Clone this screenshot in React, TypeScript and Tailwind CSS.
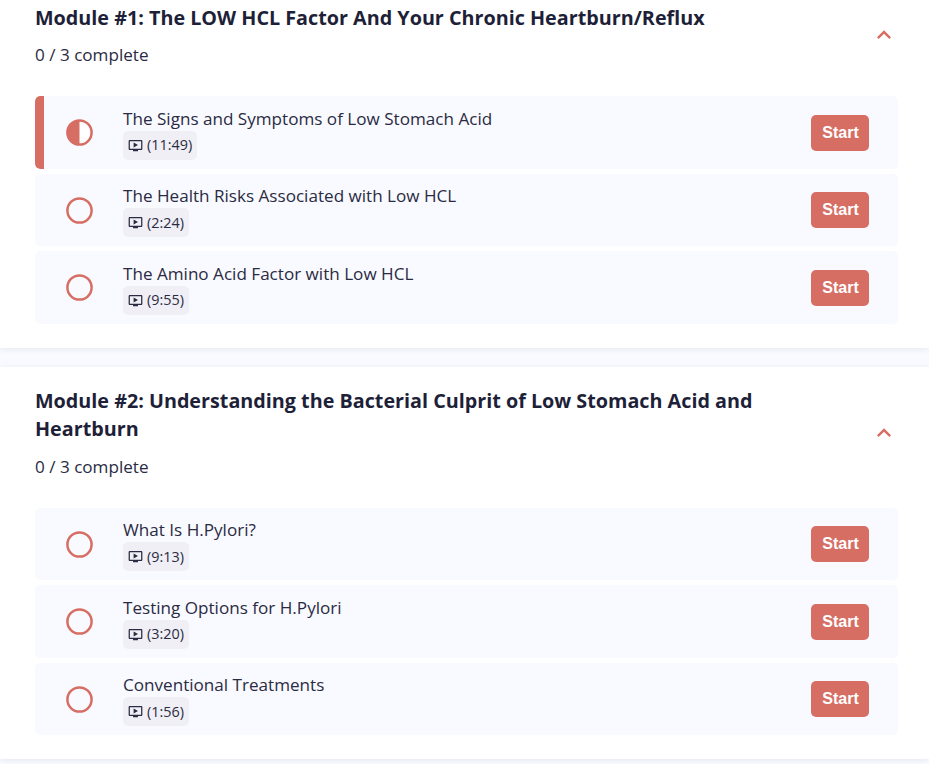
import React from 'react';

type Lesson = { title: string; time: string; active?: boolean };
type Module = { title: string; lessons: Lesson[] };

const first: Module = {
  title: 'Module #1: The LOW HCL Factor And Your Chronic Heartburn/Reflux',
  lessons: [
    { title: 'The Signs and Symptoms of Low Stomach Acid', time: '11:49', active: true },
    { title: 'The Health Risks Associated with Low HCL', time: '2:24' },
    { title: 'The Amino Acid Factor with Low HCL', time: '9:55' },
  ],
};

const second: Module = {
  title: 'Module #2: Understanding the Bacterial Culprit of Low Stomach Acid and Heartburn',
  lessons: [
    { title: 'What Is H.Pylori?', time: '9:13' },
    { title: 'Testing Options for H.Pylori', time: '3:20' },
    { title: 'Conventional Treatments', time: '1:56' },
  ],
};

function ChevronUp() {
  return (
    <svg className="mr-[0.5px] mb-[3px] h-7 w-7 shrink-0 text-[#d66e64]" viewBox="0 0 24 24" fill="currentColor">
      <path d="M12 8l-6 6 1.41 1.41L12 10.83l4.59 4.58L18 14z" />
    </svg>
  );
}

function ProgressCircle({ half }: { half?: boolean }) {
  return (
    <svg className="h-[27px] w-[27px] shrink-0 text-[#d66e64]" viewBox="0 0 27 27">
      <circle cx="13.5" cy="13.5" r="12.1" fill={half ? 'white' : 'none'} stroke="currentColor" strokeWidth="2.5" />
      {half && <path d="M13.5 1a12.5 12.5 0 0 0 0 25z" fill="currentColor" />}
    </svg>
  );
}

function VideoIcon() {
  return (
    <svg className="h-[15px] w-[15px] shrink-0" viewBox="0 0 24 24" fill="currentColor">
      <path d="M21 3H3c-1.11 0-2 .89-2 2v12c0 1.1.89 2 2 2h5v2h8v-2h5c1.1 0 2-.9 2-2V5c0-1.11-.9-2-2-2zm0 14H3V5h18v12zm-5-6l-7 4V7z" />
    </svg>
  );
}

function LessonRow({ title, time, active }: Lesson) {
  return (
    <li className="flex h-[72.5px] items-center overflow-hidden rounded-[5px] bg-[#f9faff] pr-[29px]">
      <div className={active ? 'h-full w-[9px] rounded-l-[5px] bg-[#d66e64]' : 'h-full w-[9px]'}></div>
      <div className="ml-[22px] flex">
        <ProgressCircle half={active} />
      </div>
      <div className="ml-[30px] flex flex-1 flex-col items-start text-[#2a2b43]">
        <p className="text-[17.1px] leading-[25px]">{title}</p>
        <div className="flex h-[29px] items-center gap-1 rounded-[5px] bg-[#f0eff5] px-[5px] text-[14.4px]">
          <VideoIcon />
          <span>({time})</span>
        </div>
      </div>
      <button className="h-9 w-[58px] rounded-[5px] bg-[#d66e64] pl-px font-['Liberation_Sans',sans-serif] text-[16px] font-bold text-white">
        Start
      </button>
    </li>
  );
}

function ModuleCard({ module, className }: { module: Module; className: string }) {
  return (
    <section className={`bg-white pr-[31px] pl-[35px] shadow-[0_1px_6px_rgba(0,0,0,0.08)] ${className}`}>
      <div className="flex items-center justify-between">
        <div className="w-[760px]">
          <h2 className="text-[19.75px] leading-7 font-bold">{module.title}</h2>
          <p className="mt-[9.5px] text-[17.1px] leading-7 text-[#2a2b43]">0 / 3 complete</p>
        </div>
        <ChevronUp />
      </div>
      <ul className="mt-[27px] flex flex-col gap-[5px]">
        {module.lessons.map((lesson) => (
          <LessonRow key={lesson.title} {...lesson} />
        ))}
      </ul>
    </section>
  );
}

export default function App() {
  return (
    <div className="flex h-[764px] flex-col gap-[19px] overflow-hidden bg-[#f9faff] font-['Open_Sans',sans-serif] text-[#1e1f38]">
      <ModuleCard module={first} className="h-[348px] shrink-0 pt-[3.9px]" />
      <ModuleCard module={second} className="h-[392px] shrink-0 pt-[20.4px]" />
    </div>
  );
}
